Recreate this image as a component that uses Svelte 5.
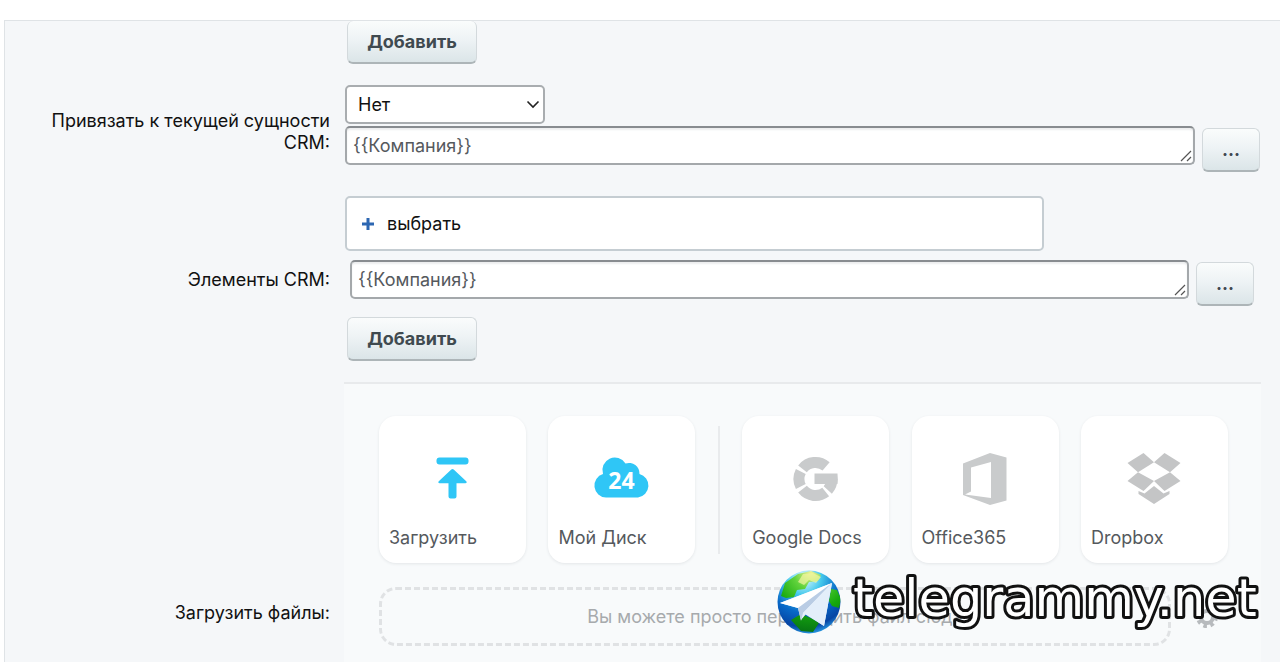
<script>
  let binding = $state('no');
  let entity = $state('{{Компания}}');
  let element = $state('{{Компания}}');
</script>

<main class="page">
  <form class="panel" onsubmit={(e) => e.preventDefault()}>
    <div class="row first">
      <span></span>
      <div class="field"><button type="button" class="btn add top">Добавить</button></div>
    </div>

    <div class="row binding">
      <label class="caption" for="binding">Привязать к текущей сущности CRM:</label>
      <div class="field">
        <div class="select">
          <select id="binding" bind:value={binding}>
            <option value="no">Нет</option>
            <option value="yes">Да</option>
          </select>
          <svg width="14" height="9" viewBox="0 0 14 9" aria-hidden="true">
            <path d="M1.5 1.5 7 7l5.500-5.500" fill="none" stroke="#222" stroke-width="1.600" />
          </svg>
        </div>
        <div class="line">
          <div class="area">
            <textarea rows="1" aria-label="Значение сущности CRM" bind:value={entity}></textarea>
            <svg class="grip" width="14" height="14" viewBox="0 0 14 14" aria-hidden="true">
              <path d="M2 12 12 2M8 12l4-4" fill="none" stroke="#555" stroke-width="1.200" />
            </svg>
          </div>
          <button type="button" class="btn more">...</button>
        </div>
      </div>
    </div>

    <div class="row elements">
      <label class="caption" for="element">Элементы CRM:</label>
      <div class="field">
        <button type="button" class="choose">
          <svg width="12" height="12" viewBox="0 0 12 12" aria-hidden="true">
            <path d="M6 0v12M0 6h12" stroke="#2d67b2" stroke-width="3" />
          </svg>
          <span>выбрать</span>
        </button>
        <div class="line inset">
          <div class="area">
            <textarea id="element" rows="1" bind:value={element}></textarea>
            <svg class="grip" width="14" height="14" viewBox="0 0 14 14" aria-hidden="true">
              <path d="M2 12 12 2M8 12l4-4" fill="none" stroke="#555" stroke-width="1.200" />
            </svg>
          </div>
          <button type="button" class="btn more">...</button>
        </div>
        <button type="button" class="btn add">Добавить</button>
      </div>
    </div>

    <div class="row files">
      <span class="caption">Загрузить файлы:</span>
      <div class="uploader">
        <div class="cards">
          <button type="button" class="card">
            <svg viewBox="0 0 60 60" aria-hidden="true">
              <g fill="#2fc6f6">
                <rect x="13.500" y="7.500" width="32" height="7" rx="3" />
                <path d="M28.300 19.500q1.200-1 2.400 0L43.500 31.500q.8 1.700-1 1.700h-9V46.500q0 2-2 2h-4q-2 0-2-2V33.200h-9q-1.800 0-1-1.700z" />
              </g>
            </svg>
            <span>Загрузить</span>
          </button>
          <button type="button" class="card">
            <svg viewBox="0 0 60 60" aria-hidden="true">
              <path d="M14 47.500A12 12 0 0 1 11 24a12.500 12.500 0 0 1 22.500-10.500A10.500 10.500 0 0 1 47.500 24A12 12 0 0 1 46 47.500z" fill="#2fc6f6" />
              <text x="29.500" y="39" text-anchor="middle" font-family="Open Sans, sans-serif" font-size="23" font-weight="700" fill="#fff">24</text>
            </svg>
            <span>Мой Диск</span>
          </button>
          <i class="divider"></i>
          <button type="button" class="card">
            <svg viewBox="0 0 60 60" aria-hidden="true">
              <g fill="none" stroke="#c9cbcc" stroke-width="11">
                <path d="M16.500 18.800A16.500 16.500 0 0 1 40.100 16.400" />
                <path d="M14.800 21.500A16.500 16.500 0 0 0 14.800 36.500" />
                <path d="M16.500 39.200A16.500 16.500 0 0 0 39.700 42" />
                <path d="M41.800 40A16.500 16.500 0 0 0 46 29" />
              </g>
              <path d="M28.500 23.500h23q.6 5 0 10.500h-23z" fill="#c9cbcc" />
            </svg>
            <span>Google Docs</span>
          </button>
          <button type="button" class="card">
            <svg viewBox="0 0 60 60" aria-hidden="true">
              <path d="M8 13.500 35 3l16.500 4.500v43L35 55 8 45zM16 17.500V41.500L10 44.500 36 48V12z" fill="#c9cbcc" fill-rule="evenodd" />
            </svg>
            <span>Office365</span>
          </button>
          <button type="button" class="card">
            <svg viewBox="0 0 60 60" aria-hidden="true">
              <path d="M19.500 3 30 12.300 14 22.300 3.500 13zM40.500 3 56.500 13 46 22.300 30 12.300zM14 22.300 30 31 19.500 41 3.500 31zM46 22.300 56.500 31 40.500 41 30 31zM30 36 39.500 43.500 45.500 41v3L30 54 14.500 44v-3l6 2.500z" fill="#c4c5c6" />
            </svg>
            <span>Dropbox</span>
          </button>
        </div>
        <div class="drop-line">
          <div class="drop">Вы можете просто перетащить файл сюда</div>
          <button type="button" class="gear" aria-label="Настройки">
            <svg width="22" height="22" viewBox="0 0 22 22" aria-hidden="true">
              <circle cx="11" cy="11" r="6" fill="none" stroke="#b7babd" stroke-width="4" />
              <circle cx="11" cy="11" r="9" fill="none" stroke="#b7babd" stroke-width="4" stroke-dasharray="3.500 3.570" />
            </svg>
          </button>
        </div>
      </div>
    </div>
  </form>

  <div class="brand">
    <svg class="globe" viewBox="0 0 64 64" aria-hidden="true">
      <defs>
        <radialGradient id="sea" cx=".42" cy=".12" r=".9">
          <stop offset="0" stop-color="#e8fbff" />
          <stop offset=".3" stop-color="#45c9ec" />
          <stop offset=".6" stop-color="#0869c8" />
          <stop offset=".85" stop-color="#0645a4" />
          <stop offset="1" stop-color="#2ca5ea" />
        </radialGradient>
        <radialGradient id="land" cx=".5" cy="0" r="1">
          <stop offset="0" stop-color="#f3f49a" />
          <stop offset=".3" stop-color="#5fd23b" />
          <stop offset=".65" stop-color="#16a80d" />
          <stop offset="1" stop-color="#087614" />
        </radialGradient>
        <clipPath id="round"><circle cx="32" cy="32" r="31.500" /></clipPath>
      </defs>
      <g clip-path="url(#round)">
        <path d="M0 0h64v64H0z" fill="url(#sea)" />
        <path d="M4 26 8 13 21 4l13-3 10 4-3 6-9 1-4 7-8 1-3 7-8 1zM54 19l6 1 4 9-2 9-7-2-3-5zM14 50l10-6 12 5 6 4-6 9-12-1z" fill="url(#land)" />
        <path d="M26 4 36 3l8 4-5 6-7-3-5 5-6-3z" fill="#f3f6a1" opacity=".7" />
      </g>
      <path d="M3 33 55 13 47 56 29 44l-5 6-3-12z" fill="#e7f0fb" />
      <path d="M3 33 55 13 21 38z" fill="#fff" />
      <path d="M21 38 55 13 26 43l-2 8z" fill="#b9cce4" />
      <path d="M26 43 55 13 47 56z" fill="#e3eefa" />
    </svg>
    <svg class="name" width="412" height="64" viewBox="0 0 412 64">
      <text x="2" y="46">telegrammy.net</text>
    </svg>
  </div>
</main>

<style>
  :global(body) {
    margin: 0;
    background: #fff;
  }
  .page,
  .page * {
    box-sizing: border-box;
  }
  .page {
    position: relative;
    height: 100vh;
    overflow: hidden;
    padding: 20px 0 0 4px;
    display: flex;
    font-family: Inter, "Liberation Sans", sans-serif;
    font-size: 18px;
    line-height: 22px;
    color: #111;
  }
  button,
  select,
  textarea {
    font: inherit;
    margin: 0;
  }
  .panel {
    flex: 1;
    min-width: 0;
    border: solid #dfe3e6;
    border-width: 1px 0 0 1px;
    background: #f5f7f9;
    padding-right: 19px;
  }
  .row {
    display: grid;
    grid-template-columns: 325px minmax(0, 1fr);
    column-gap: 15px;
    align-items: center;
  }
  .binding {
    margin-top: 21px;
  }
  .elements {
    margin-top: 24px;
  }
  .files {
    margin-top: 21px;
    column-gap: 14px;
    align-items: start;
  }
  .caption {
    padding-top: 2px;
    text-align: right;
  }
  .binding .caption {
    padding: 7px 0 0 40px;
  }
  .files .caption {
    padding-top: 220px;
  }
  .btn {
    display: block;
    height: 44px;
    border: 1px solid #d3d9dc;
    border-bottom: 2px solid #adb5b8;
    border-radius: 6px;
    background: linear-gradient(#fafcfc, #eef3f5 45%, #dbe5e8);
    color: #3f4a50;
    font-weight: 700;
  }
  .add {
    width: 130px;
    margin-left: 2px;
    padding: 0;
  }
  .top {
    height: 43px;
    border-top: 0;
  }
  .more {
    flex: none;
    width: 58px;
    margin-top: 2px;
    padding: 0;
  }
  .select {
    position: relative;
    width: 200px;
  }
  .select svg {
    position: absolute;
    right: 5px;
    top: 15px;
    pointer-events: none;
  }
  select {
    display: block;
    appearance: none;
    width: 100%;
    height: 39px;
    padding: 0 11px;
    border: 2px solid #a9adb0;
    border-radius: 5px;
    background: #fff;
    color: #111;
  }
  .line {
    display: flex;
    gap: 7px;
    margin-top: 2px;
    padding-right: 1px;
    align-items: flex-start;
  }
  .inset {
    margin: 9px 6px 11px 5px;
  }
  .area {
    position: relative;
    flex: 1;
    height: 39px;
  }
  textarea {
    display: block;
    width: 100%;
    height: 100%;
    resize: none;
    overflow: hidden;
    padding: 7px 6px;
    border: 2px solid #a4a8ab;
    border-top-color: #888c90;
    border-radius: 5px;
    background: #fff;
    box-shadow: inset 0 2px 2px #eceeef;
    color: #55595d;
  }
  .grip {
    position: absolute;
    right: 2px;
    bottom: 2px;
  }
  .choose {
    display: flex;
    align-items: center;
    gap: 13px;
    width: 699px;
    max-width: 100%;
    height: 55px;
    padding: 0 15px;
    border: 2px solid #c5cdd2;
    border-radius: 5px;
    background: #fff;
    color: #111;
  }
  .uploader {
    border-top: 2px solid #e8eaec;
    background: #f8fafb;
    padding: 32px 33px 32px 35px;
    min-height: 460px;
  }
  .cards {
    display: flex;
    justify-content: space-between;
    align-items: center;
  }
  .card {
    display: flex;
    flex-direction: column;
    align-items: flex-start;
    justify-content: space-between;
    width: 147px;
    height: 147px;
    padding: 34px 10px 14px;
    border: 0;
    border-radius: 17px;
    background: #fff;
    box-shadow: 0 1px 3px #e3e6e8;
    color: #55595d;
  }
  .card svg {
    align-self: center;
    width: 60px;
    height: 60px;
  }
  .divider {
    width: 2px;
    height: 128px;
    background: #e9ebed;
  }
  .drop-line {
    display: flex;
    align-items: center;
    gap: 25px;
    margin-top: 24px;
  }
  .drop {
    flex: 1;
    height: 59px;
    border: 3px dashed #e0e2e4;
    border-radius: 17px;
    display: flex;
    align-items: center;
    justify-content: center;
    color: #a7aaad;
  }
  .gear {
    display: flex;
    padding: 0;
    border: 0;
    margin-right: 10px;
    background: none;
  }
  .brand {
    position: absolute;
    right: 17px;
    bottom: 28px;
    display: flex;
    align-items: center;
    gap: 10px;
    pointer-events: none;
  }
  .globe {
    width: 64px;
    height: 64px;
  }
  .name {
    overflow: visible;
  }
  .name text {
    font-family: "DejaVu Sans", sans-serif;
    font-size: 51px;
    fill: #fff;
    stroke: #111;
    stroke-width: 6px;
    stroke-linejoin: round;
    paint-order: stroke;
  }
</style>
